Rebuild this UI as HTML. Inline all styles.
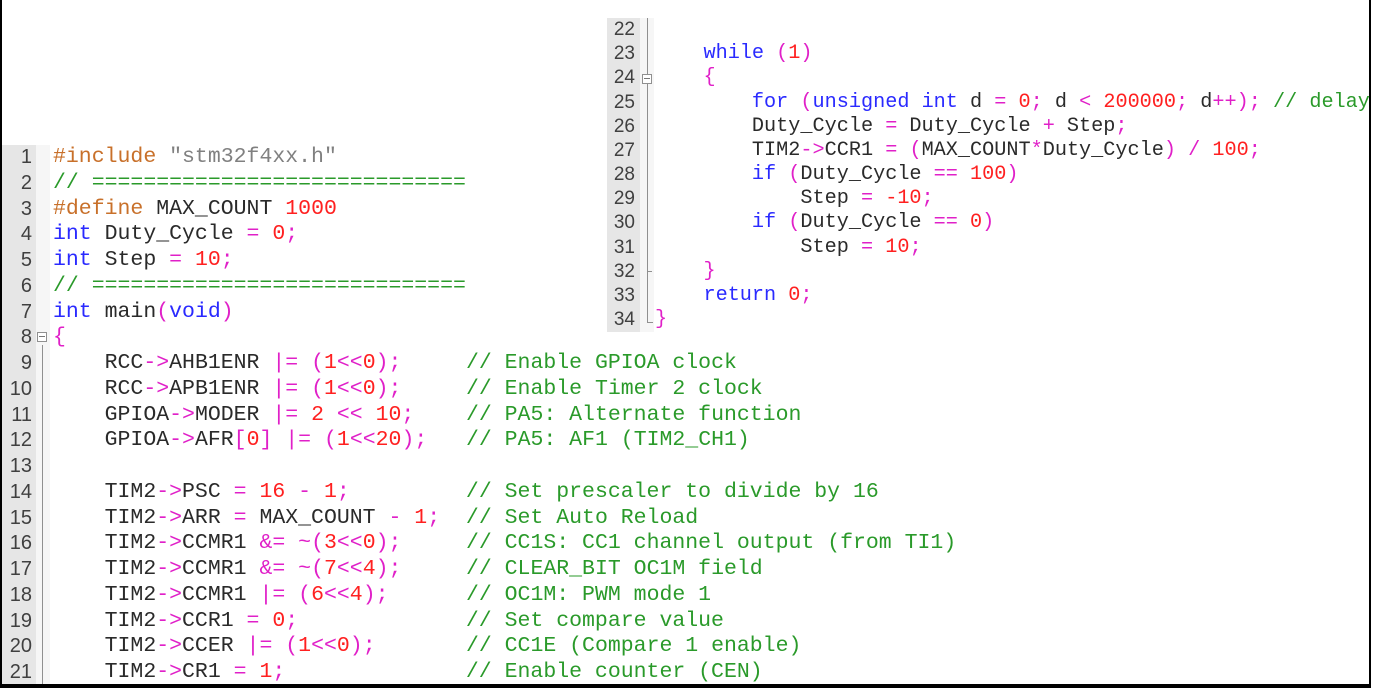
<!DOCTYPE html>
<html><head><meta charset="utf-8"><style>
body{margin:0;width:1381px;height:688px;background:#fff;position:relative;overflow:hidden;}
.pre{position:absolute;margin:0;white-space:pre;color:#2a2a2a;font-family:"Liberation Mono","Courier New","DejaVu Sans Mono",monospace;}
.k{color:#2a2aff}.p{color:#c8702a}.s{color:#808080}.n{color:#ff2020}.o{color:#e020c8}.c{color:#2a9a2a}
.num{position:absolute;margin:0;white-space:pre;text-align:right;color:#404040;font-family:"Liberation Sans",sans-serif;}
</style></head><body>
<div style="position:absolute;left:0;top:0;width:2px;height:688px;background:#000"></div>
<div style="position:absolute;left:1369px;top:0;width:2px;height:688px;background:#000"></div>
<div style="position:absolute;left:0;top:684px;width:1371px;height:4px;background:#000"></div>

<div style="position:absolute;left:2px;top:145px;width:34px;height:539px;background:#e6e6e6"></div>
<div style="position:absolute;left:36px;top:145px;width:14px;height:539px;background:#f6f6f6"></div>
<div style="position:absolute;left:42px;top:345px;width:1px;height:339px;background:#909090"></div>
<div style="position:absolute;left:37px;top:332px;width:10px;height:10px;border:1px solid #909090;background:#fff;box-sizing:border-box"><div style="position:absolute;left:1px;top:3px;width:6px;height:1px;background:#777"></div></div>
<div class="num" style="left:2px;top:145px;width:30px;font-size:20px;line-height:25.75px">1
2
3
4
5
6
7
8
9
10
11
12
13
14
15
16
17
18
19
20
21</div>
<div class="pre" style="left:53px;top:145px;font-size:21.5px;line-height:25.75px"><span class="p">#include</span> <span class="s">"stm32f4xx.h"</span>
<span class="c">// =============================</span>
<span class="p">#define</span> MAX_COUNT <span class="n">1000</span>
<span class="k">int</span> Duty_Cycle <span class="o">=</span> <span class="n">0</span><span class="o">;</span>
<span class="k">int</span> Step <span class="o">=</span> <span class="n">10</span><span class="o">;</span>
<span class="c">// =============================</span>
<span class="k">int</span> main<span class="o">(</span><span class="k">void</span><span class="o">)</span>
<span class="o">{</span>
    RCC<span class="o">-&gt;</span>AHB1ENR <span class="o">|=</span> <span class="o">(</span><span class="n">1</span><span class="o">&lt;&lt;</span><span class="n">0</span><span class="o">);</span>     <span class="c">// Enable GPIOA clock</span>
    RCC<span class="o">-&gt;</span>APB1ENR <span class="o">|=</span> <span class="o">(</span><span class="n">1</span><span class="o">&lt;&lt;</span><span class="n">0</span><span class="o">);</span>     <span class="c">// Enable Timer 2 clock</span>
    GPIOA<span class="o">-&gt;</span>MODER <span class="o">|=</span> <span class="n">2</span> <span class="o">&lt;&lt;</span> <span class="n">10</span><span class="o">;</span>    <span class="c">// PA5: Alternate function</span>
    GPIOA<span class="o">-&gt;</span>AFR<span class="o">[</span><span class="n">0</span><span class="o">]</span> <span class="o">|=</span> <span class="o">(</span><span class="n">1</span><span class="o">&lt;&lt;</span><span class="n">20</span><span class="o">);</span>   <span class="c">// PA5: AF1 (TIM2_CH1)</span>

    TIM2<span class="o">-&gt;</span>PSC <span class="o">=</span> <span class="n">16</span> <span class="o">-</span> <span class="n">1</span><span class="o">;</span>         <span class="c">// Set prescaler to divide by 16</span>
    TIM2<span class="o">-&gt;</span>ARR <span class="o">=</span> MAX_COUNT <span class="o">-</span> <span class="n">1</span><span class="o">;</span>  <span class="c">// Set Auto Reload</span>
    TIM2<span class="o">-&gt;</span>CCMR1 <span class="o">&amp;=</span> <span class="o">~(</span><span class="n">3</span><span class="o">&lt;&lt;</span><span class="n">0</span><span class="o">);</span>     <span class="c">// CC1S: CC1 channel output (from TI1)</span>
    TIM2<span class="o">-&gt;</span>CCMR1 <span class="o">&amp;=</span> <span class="o">~(</span><span class="n">7</span><span class="o">&lt;&lt;</span><span class="n">4</span><span class="o">);</span>     <span class="c">// CLEAR_BIT OC1M field</span>
    TIM2<span class="o">-&gt;</span>CCMR1 <span class="o">|=</span> <span class="o">(</span><span class="n">6</span><span class="o">&lt;&lt;</span><span class="n">4</span><span class="o">);</span>      <span class="c">// OC1M: PWM mode 1</span>
    TIM2<span class="o">-&gt;</span>CCR1 <span class="o">=</span> <span class="n">0</span><span class="o">;</span>             <span class="c">// Set compare value</span>
    TIM2<span class="o">-&gt;</span>CCER <span class="o">|=</span> <span class="o">(</span><span class="n">1</span><span class="o">&lt;&lt;</span><span class="n">0</span><span class="o">);</span>       <span class="c">// CC1E (Compare 1 enable)</span>
    TIM2<span class="o">-&gt;</span>CR1 <span class="o">=</span> <span class="n">1</span><span class="o">;</span>              <span class="c">// Enable counter (CEN)</span></div>

<div style="position:absolute;left:607px;top:18px;width:33px;height:314px;background:#e6e6e6"></div>
<div style="position:absolute;left:640px;top:18px;width:14px;height:314px;background:#f6f6f6"></div>
<div style="position:absolute;left:647px;top:18px;width:1px;height:305px;background:#909090"></div>
<div style="position:absolute;left:647px;top:322px;width:6px;height:1px;background:#909090"></div>
<div style="position:absolute;left:647px;top:271px;width:5px;height:1px;background:#909090"></div>
<div style="position:absolute;left:642px;top:74px;width:10px;height:10px;border:1px solid #909090;background:#fff;box-sizing:border-box"><div style="position:absolute;left:1px;top:3px;width:6px;height:1px;background:#777"></div></div>
<div class="num" style="left:607px;top:18px;width:28px;font-size:19px;line-height:24.17px">22
23
24
25
26
27
28
29
30
31
32
33
34</div>
<div class="pre" style="left:655px;top:18px;font-size:20.2px;line-height:24.17px">
    <span class="k">while</span> <span class="o">(</span><span class="n">1</span><span class="o">)</span>
    <span class="o">{</span>
        <span class="k">for</span> <span class="o">(</span><span class="k">unsigned</span> <span class="k">int</span> d <span class="o">=</span> <span class="n">0</span><span class="o">;</span> d <span class="o">&lt;</span> <span class="n">200000</span><span class="o">;</span> d<span class="o">++);</span> <span class="c">// delay</span>
        Duty_Cycle <span class="o">=</span> Duty_Cycle <span class="o">+</span> Step<span class="o">;</span>
        TIM2<span class="o">-&gt;</span>CCR1 <span class="o">=</span> <span class="o">(</span>MAX_COUNT<span class="o">*</span>Duty_Cycle<span class="o">)</span> <span class="o">/</span> <span class="n">100</span><span class="o">;</span>
        <span class="k">if</span> <span class="o">(</span>Duty_Cycle <span class="o">==</span> <span class="n">100</span><span class="o">)</span>
            Step <span class="o">=</span> <span class="n">-10</span><span class="o">;</span>
        <span class="k">if</span> <span class="o">(</span>Duty_Cycle <span class="o">==</span> <span class="n">0</span><span class="o">)</span>
            Step <span class="o">=</span> <span class="n">10</span><span class="o">;</span>
    <span class="o">}</span>
    <span class="k">return</span> <span class="n">0</span><span class="o">;</span>
<span class="o">}</span></div>
<div style="position:absolute;left:1371px;top:0;width:10px;height:688px;background:#fff"></div>
</body></html>
